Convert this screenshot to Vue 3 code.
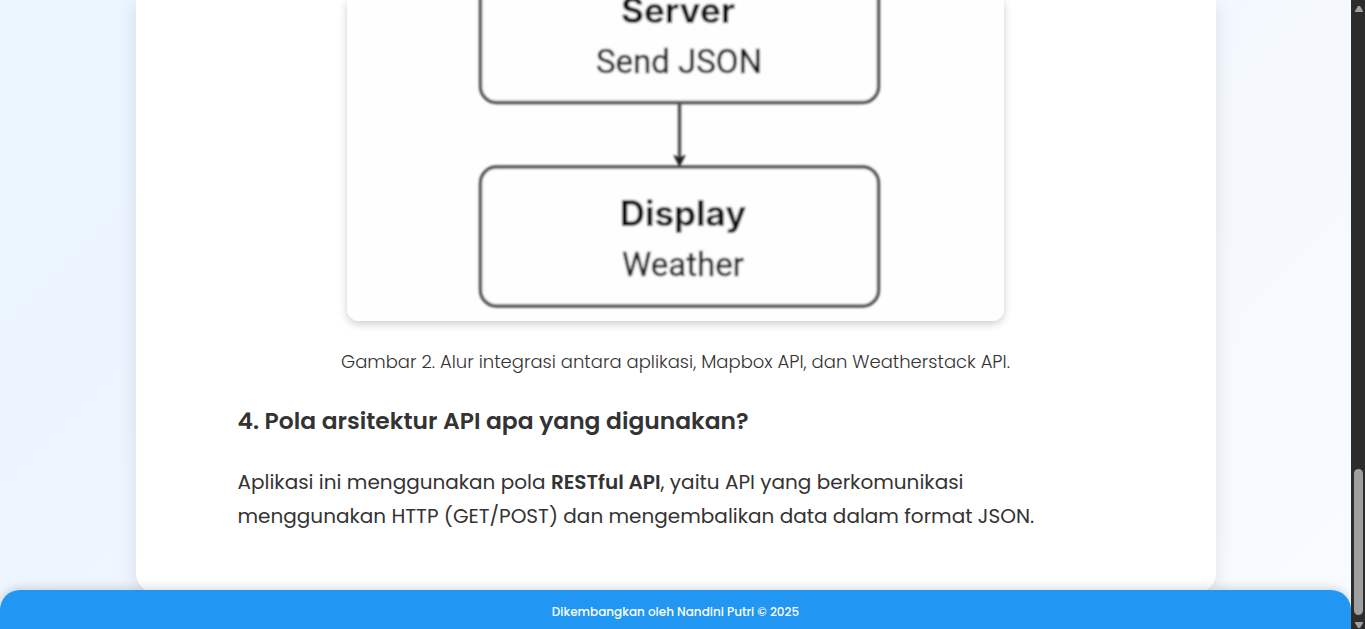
<script setup>
const credit = 'Dikembangkan oleh Nandini Putri © 2025'
</script>

<template>
  <div class="app">
    <div class="page">
      <main class="card">
        <figure class="figure">
          <svg class="diagram" viewBox="0 0 657 321" role="img" aria-label="Alur integrasi API">
            <defs>
              <filter id="soften" x="-5%" y="-5%" width="110%" height="110%">
                <feGaussianBlur stdDeviation="0.8" />
              </filter>
            </defs>
            <rect width="657" height="321" fill="#fefefe" />
            <g filter="url(#soften)">
              <g fill="#fefefe" stroke="#505050" stroke-width="3.4">
                <rect x="133.5" y="-60" width="398" height="162.500" rx="16" />
                <rect x="133.5" y="167" width="398" height="139" rx="16" />
                <path d="M332.500 102V162" />
              </g>
              <path d="M327 155.500L332.500 158L338 155.500L332.500 166Z" fill="#1c1c1c" stroke="#1c1c1c" stroke-width="1" />
              <g text-anchor="middle">
                <text class="title" x="331" y="23">Server</text>
                <text class="detail" x="332" y="73">Send JSON</text>
                <text class="title" x="336" y="226">Display</text>
                <text class="detail" x="336" y="276">Weather</text>
              </g>
            </g>
          </svg>
          <figcaption class="caption">Gambar 2. Alur integrasi antara aplikasi, Mapbox API, dan Weatherstack API.</figcaption>
        </figure>
        <h3 class="question">4. Pola arsitektur API apa yang digunakan?</h3>
        <p class="answer">
          Aplikasi ini menggunakan pola <strong>RESTful API</strong>, yaitu API yang berkomunikasi
          menggunakan HTTP (GET/POST) dan mengembalikan data dalam format JSON.
        </p>
      </main>
      <footer class="footer">{{ credit }}</footer>
    </div>
    <div class="scrollbar" aria-hidden="true">
      <svg class="arrow" viewBox="0 0 10 8"><path d="M4 1H6L9 6V7H1V6Z" /></svg>
      <div class="thumb"></div>
      <svg class="arrow" viewBox="0 0 10 8"><path d="M1 1H9V2L6 7H4L1 2Z" /></svg>
    </div>
  </div>
</template>

<style>
body {
  margin: 0;
}
</style>

<style scoped>
.app {
  display: flex;
  min-height: 100vh;
  font-family: Poppins, Inter, sans-serif;
  color: #333;
}
.page {
  flex: 1;
  min-width: 0;
  display: flex;
  flex-direction: column;
  overflow: hidden;
  background: linear-gradient(135deg, #eaf5ff 0%, #edf5ff 30%, #f5f9fe 70%, #f8fbff 100%);
}
.card {
  box-sizing: border-box;
  width: 100%;
  max-width: 1080px;
  margin: 0 auto;
  padding: 0 102px 60px;
  background: #fff;
  border-radius: 0 0 20px 20px;
  box-shadow: 0 4px 20px rgba(0, 0, 0, 0.1);
  font-size: 20px;
}
.figure {
  margin: 0;
  display: flex;
  flex-direction: column;
  align-items: center;
}
.diagram {
  display: block;
  width: 75%;
  border-radius: 0 0 12px 12px;
  box-shadow: 0 3px 8px rgba(0, 0, 0, 0.2);
}
.title {
  font-family: Inter, sans-serif;
  font-size: 35px;
  font-weight: 700;
  fill: #111;
}
.detail {
  font-family: Roboto, sans-serif;
  font-size: 33px;
  font-weight: 400;
  fill: #111;
  stroke: #333;
  stroke-width: 0.5;
}
.caption {
  margin-top: 27px;
  font-size: 18px;
  font-weight: 300;
  line-height: 28px;
  color: #333;
}
.question {
  margin: 27px 0 26px;
  line-height: 36px;
  font-weight: 600;
}
.answer {
  margin: 0;
  line-height: 34px;
}
.answer strong {
  font-weight: 600;
}
.footer {
  position: relative;
  flex: 1;
  display: flex;
  align-items: center;
  justify-content: center;
  box-sizing: border-box;
  min-height: 39px;
  margin-top: -3px;
  padding: 4px 16px 0;
  background: #2196f3;
  border-radius: 20px 20px 0 0;
  box-shadow: 0 -2px 10px rgba(0, 0, 0, 0.15);
  color: #fff;
  font-size: 12px;
  font-weight: 500;
  line-height: 20px;
}
.scrollbar {
  box-sizing: border-box;
  width: 14px;
  padding: 5px 1px 0 2px;
  display: flex;
  flex-direction: column;
  align-items: center;
  background: #2c2c2c;
}
.arrow {
  display: block;
  width: 10px;
  height: 8px;
  fill: #9f9f9f;
}
.thumb {
  width: 9px;
  height: 146px;
  margin: auto 0 6px;
  border-radius: 5px;
  background: #9f9f9f;
}
</style>
